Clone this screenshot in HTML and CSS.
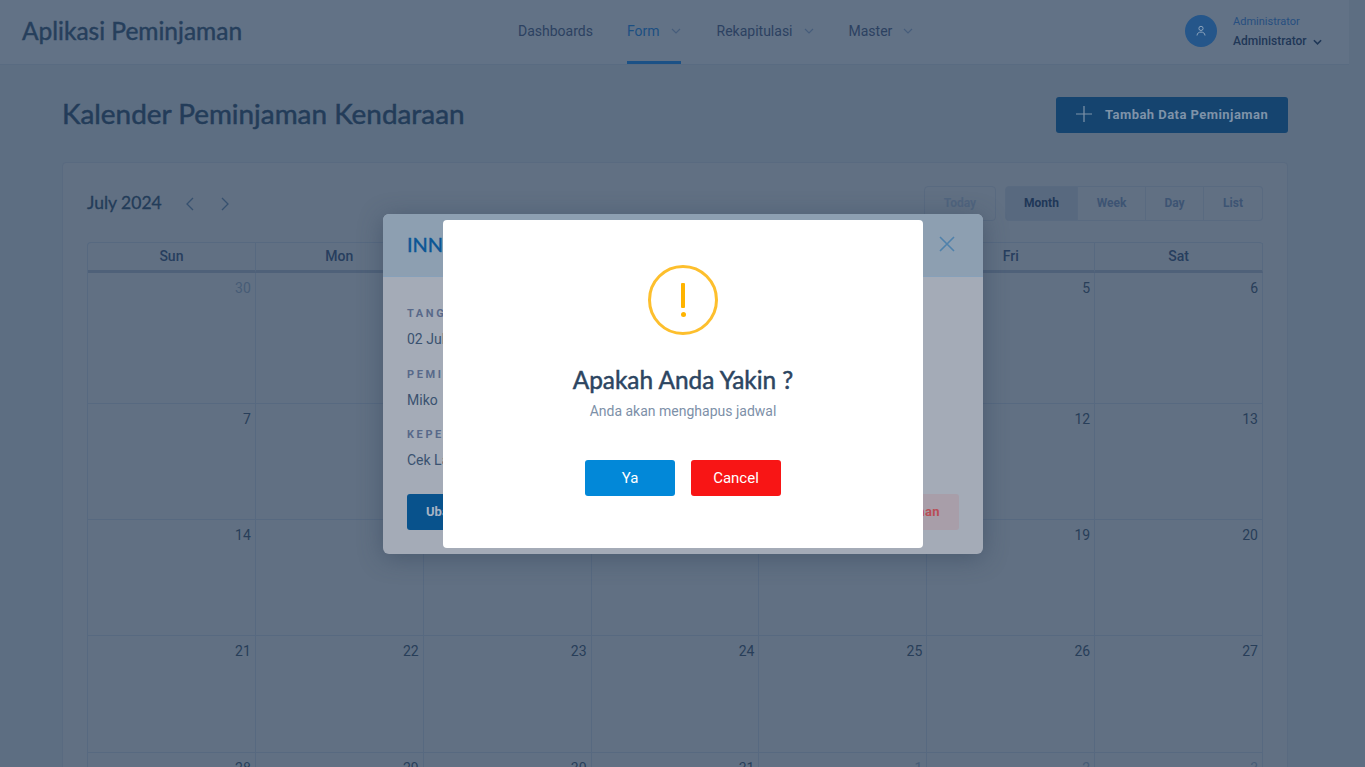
FILE: index.html
```html
<!DOCTYPE html>
<html lang="en">

<head>
    <meta charset="UTF-8">
    <meta name="viewport" content="width=device-width, initial-scale=1.0">
    <title>Kalender Peminjaman Kendaraan</title>
    <link rel="stylesheet" href="styles.css">
</head>

<body>
    <div id="nav">
        <div class="brand">Aplikasi Peminjaman</div>
        <div class="menu">
            <a>Dashboards</a>
            <a class="active">Form <svg class="chev" viewBox="0 0 10 6"><path d="M1 1l4 4 4-4" /></svg></a>
            <a>Rekapitulasi <svg class="chev" viewBox="0 0 10 6"><path d="M1 1l4 4 4-4" /></svg></a>
            <a>Master <svg class="chev" viewBox="0 0 10 6"><path d="M1 1l4 4 4-4" /></svg></a>
        </div>
        <div class="user">
            <div class="avatar">
                <svg viewBox="0 0 12 12" width="12" height="12"><circle cx="6" cy="3.4" r="2.1" /><path d="M2 10.5c.3-2.4 1.6-3.4 4-3.4s3.700 1 4 3.400" /></svg>
            </div>
            <div>
                <p class="role">Administrator</p>
                <p class="name">Administrator <svg class="chev-bold" viewBox="0 0 10 6"><path d="M1 1l4 4 4-4" /></svg></p>
            </div>
        </div>
    </div>

    <div class="content">
        <div class="title-row">
            <h1>Kalender Peminjaman Kendaraan</h1>
            <button class="add-btn">
                <svg viewBox="0 0 16 16" width="16" height="16"><path d="M8 0v16M0 8h16" /></svg>
                Tambah Data Peminjaman
            </button>
        </div>

        <div class="card">
            <div class="toolbar">
                <div class="month">
                    <h2>July 2024</h2>
                    <svg class="arrow" viewBox="0 0 10 14"><path d="M8 1L2 7l6 6" /></svg>
                    <svg class="arrow" viewBox="0 0 10 14"><path d="M2 1l6 6-6 6" /></svg>
                </div>
                <div class="views">
                    <button class="today">Today</button>
                    <div class="group">
                        <button class="on">Month</button>
                        <button>Week</button>
                        <button>Day</button>
                        <button>List</button>
                    </div>
                </div>
            </div>

            <div class="calendar">
                <div class="head">Sun</div>
                <div class="head">Mon</div>
                <div class="head">Tue</div>
                <div class="head">Wed</div>
                <div class="head">Thu</div>
                <div class="head">Fri</div>
                <div class="head">Sat</div>

                <div class="day other">30</div>
                <div class="day">1</div>
                <div class="day">2</div>
                <div class="day">3</div>
                <div class="day">4</div>
                <div class="day">5</div>
                <div class="day">6</div>

                <div class="day">7</div>
                <div class="day">8</div>
                <div class="day">9</div>
                <div class="day">10</div>
                <div class="day">11</div>
                <div class="day">12</div>
                <div class="day">13</div>

                <div class="day">14</div>
                <div class="day">15</div>
                <div class="day">16</div>
                <div class="day">17</div>
                <div class="day">18</div>
                <div class="day">19</div>
                <div class="day">20</div>

                <div class="day">21</div>
                <div class="day">22</div>
                <div class="day">23</div>
                <div class="day">24</div>
                <div class="day">25</div>
                <div class="day">26</div>
                <div class="day">27</div>

                <div class="day">28</div>
                <div class="day">29</div>
                <div class="day">30</div>
                <div class="day">31</div>
                <div class="day other">1</div>
                <div class="day other">2</div>
                <div class="day other">3</div>
            </div>
        </div>
    </div>

    <div class="detail">
        <div class="detail-head">
            <h3>INNOVA</h3>
            <svg viewBox="0 0 16 16" width="16" height="16"><path d="M1 1l14 14M15 1L1 15" /></svg>
        </div>
        <div class="detail-body">
            <p class="label">TANGGAL</p>
            <p class="value">02 Juli 2024</p>
            <p class="label">PEMINJAM</p>
            <p class="value">Miko</p>
            <p class="label">KEPERLUAN</p>
            <p class="value">Cek Lapangan</p>
            <div class="detail-actions">
                <button class="edit">Ubah</button>
                <button class="remove">Hapus Peminjaman</button>
            </div>
        </div>
    </div>

    <div class="alert">
        <div class="alert-icon"><span class="bar"></span><span class="dot"></span></div>
        <h2>Apakah Anda Yakin ?</h2>
        <p>Anda akan menghapus jadwal</p>
        <div class="alert-actions">
            <button class="yes">Ya</button>
            <button class="no">Cancel</button>
        </div>
    </div>
</body>

</html>
```

FILE: styles.css
```css
* {
    box-sizing: border-box;
}

html,
body {
    height: 767px;
    overflow: hidden;
}

body {
    margin: 0;
    padding-right: 16px;
    background: #5d6e82;
    color: #283e59;
    font-family: Roboto, "Liberation Sans", sans-serif;
    font-size: 14px;
}

p,
h1,
h2,
h3 {
    margin: 0;
}

button {
    font-family: Roboto, "Liberation Sans", sans-serif;
}

#nav {
    display: flex;
    align-items: center;
    height: 65px;
    padding-left: 22px;
    background: #627286;
    border-bottom: 1px solid #596b81;
}

.brand {
    width: 424px;
    margin-bottom: 3px;
    color: #263f5c;
    font-family: Lato, sans-serif;
    font-size: 24.5px;
    font-weight: 400;
    -webkit-text-stroke: .45px #263f5c;
}

.menu {
    display: flex;
    flex: 1;
    gap: 35px;
    height: 64px;
    margin-left: 72px;
}

.menu a {
    display: flex;
    align-items: center;
    gap: 10px;
    height: 64px;
    padding-bottom: 2px;
    color: #2c4161;
    font-size: 14px;
}

.menu a.active {
    margin-left: -1px;
    margin-right: 1px;
    color: #1c4f82;
    box-shadow: inset 0 -3px 0 #1b5186;
}

.chev {
    width: 10px;
    height: 6px;
    margin-left: 1px;
    fill: none;
    stroke: #465d7b;
    stroke-width: 1.1;
}

.user {
    display: flex;
    align-items: center;
    gap: 16px;
    width: 164px;
    margin-bottom: 2px;
}

.avatar {
    display: flex;
    align-items: center;
    justify-content: center;
    width: 32px;
    height: 32px;
    border-radius: 50%;
    background: #25568a;
}

.avatar svg {
    fill: none;
    stroke: #8ba3bc;
    stroke-width: 1;
}

.role {
    color: #274f80;
    font-size: 11px;
    line-height: 13px;
}

.name {
    margin-top: 6px;
    color: #1f3757;
    font-size: 12px;
    font-weight: 500;
    line-height: 14px;
}

.chev-bold {
    width: 9px;
    height: 6px;
    margin-left: 3px;
    fill: none;
    stroke: #1f3757;
    stroke-width: 1.8;
}

.content {
    padding: 32px 61px 0 62px;
}

.title-row {
    display: flex;
    align-items: center;
    justify-content: space-between;
    height: 36px;
}

h1 {
    margin-bottom: 5px;
    color: #233c59;
    font-family: Lato, sans-serif;
    font-size: 27.900px;
    font-weight: 400;
    -webkit-text-stroke: .5px #233c59;
}

.add-btn {
    display: flex;
    align-items: center;
    gap: 13px;
    width: 232px;
    height: 36px;
    padding: 0 0 2px 20px;
    border: 0;
    border-radius: 3px;
    background: #15446f;
    color: #7f93a9;
    font-size: 13px;
    font-weight: 700;
    letter-spacing: .45px;
}

.add-btn svg {
    fill: none;
    stroke: #7f93a9;
    stroke-width: 1.2;
}

.card {
    height: 640px;
    margin-top: 29px;
    padding: 23px 24px 0;
    background: #617083;
    border: 1px solid #596a80;
    border-radius: 4px;
}

.toolbar {
    display: flex;
    align-items: center;
    justify-content: space-between;
    height: 35px;
}

.month {
    display: flex;
    align-items: center;
}

.month h2 {
    width: 98px;
    margin-bottom: 2px;
    color: #233c59;
    font-family: Lato, sans-serif;
    font-size: 17.500px;
    font-weight: 400;
    -webkit-text-stroke: .3px #233c59;
}

.arrow {
    width: 10px;
    height: 14px;
    margin-right: 25px;
    fill: none;
    stroke: #36506f;
    stroke-width: 1.3;
}

.views {
    display: flex;
    gap: 9px;
}

.views button {
    height: 35px;
    padding: 0 0 1px;
    border: 1px solid #596a80;
    background: transparent;
    color: #3d5473;
    font-size: 12px;
    font-weight: 700;
}

.views .today {
    width: 72px;
    border-radius: 4px;
    color: #50647e;
}

.group {
    display: flex;
}

.group button {
    width: 58px;
    border-left: 0;
}

.group button:first-child {
    width: 73px;
    border-left: 1px solid #596a80;
    border-radius: 4px 0 0 4px;
}

.group button:nth-child(2) {
    width: 68px;
}

.group button:last-child {
    width: 59px;
    border-radius: 0 4px 4px 0;
}

.views .on {
    background: #58697f;
    color: #1f3757;
}

.calendar {
    display: grid;
    grid-template-columns: repeat(7, 1fr);
    grid-template-rows: 30px 131px 116px 116px 117px 116px;
    margin-top: 21px;
    border-top: 1px solid #576980;
    border-left: 1px solid #576980;
    border-radius: 4px 4px 0 0;
}

.head {
    padding-top: 5px;
    border-right: 1px solid #576980;
    border-bottom: 3px solid #4f6179;
    color: #273e5e;
    font-size: 14px;
    font-weight: 500;
    text-align: center;
}

.day {
    padding: 7px 4px 0 0;
    border-right: 1px solid #576980;
    border-bottom: 1px solid #576980;
    color: #283e59;
    text-align: right;
}

.day.other {
    color: #475c76;
}

.detail {
    position: absolute;
    top: 214px;
    left: 383px;
    width: 600px;
    height: 340px;
    overflow: hidden;
    border-radius: 6px;
    background: #a4abb7;
    box-shadow: 0 4px 24px rgba(45, 62, 85, .45);
}

.detail-head {
    display: flex;
    align-items: center;
    justify-content: space-between;
    height: 63px;
    padding: 0 28px 2px 24px;
    background: #8d9fb1;
    border-bottom: 1px solid #87a0b9;
}

.detail-head h3 {
    color: #0c5695;
    font-family: Lato, sans-serif;
    font-size: 20px;
    font-weight: 400;
    -webkit-text-stroke: .4px #0c5695;
}

.detail-head svg {
    fill: none;
    stroke: #4f81ab;
    stroke-width: 1.6;
}

.detail-body {
    padding: 30px 24px 0;
}

.label {
    color: #58698a;
    font-size: 11px;
    font-weight: 700;
    letter-spacing: 2.6px;
    line-height: 13px;
}

.value {
    margin-top: 9px;
    margin-bottom: 18.500px;
    color: #3a5270;
    font-size: 14px;
    line-height: 20px;
}

.detail-actions {
    display: flex;
    justify-content: space-between;
    margin-top: 24px;
}

.detail-actions button {
    height: 36px;
    padding: 0 19px 2px;
    border: 0;
    border-radius: 3px;
    font-size: 13px;
    font-weight: 700;
}

.edit {
    width: 90px;
    background: #08528c;
    color: #a7b4c4;
    text-align: left;
}

.remove {
    width: 180px;
    background: #a89ea9;
    color: #b84d56;
    letter-spacing: .4px;
    text-align: right;
}

.alert {
    position: absolute;
    top: 220px;
    left: 443px;
    width: 480px;
    height: 328px;
    padding-top: 45px;
    border-radius: 4px;
    background: #fff;
    text-align: center;
}

.alert-icon {
    position: relative;
    width: 70px;
    height: 70px;
    margin: 0 auto;
    border: 3px solid #fdbf2d;
    border-radius: 50%;
}

.bar {
    position: absolute;
    top: 15px;
    left: 30px;
    width: 4px;
    height: 25px;
    border-radius: 1px;
    background: #ffb400;
}

.dot {
    position: absolute;
    top: 44px;
    left: 29.500px;
    width: 5px;
    height: 5px;
    border-radius: 50%;
    background: #ffb400;
}

.alert h2 {
    margin-top: 31px;
    color: #2c4561;
    font-family: Lato, sans-serif;
    font-size: 24.4px;
    font-weight: 400;
    -webkit-text-stroke: .5px #2c4561;
    line-height: 27px;
}

.alert p {
    margin-top: 10px;
    color: #7d90a8;
    font-size: 14px;
    line-height: 16px;
}

.alert-actions {
    display: flex;
    justify-content: center;
    gap: 16px;
    margin-top: 41px;
}

.alert-actions button {
    width: 90px;
    height: 36px;
    padding: 0;
    border: 0;
    border-radius: 3px;
    color: #fff;
    font-size: 15px;
    font-weight: 400;
}

.yes {
    background: #0288d8;
}

.no {
    background: #f81515;
}
```
